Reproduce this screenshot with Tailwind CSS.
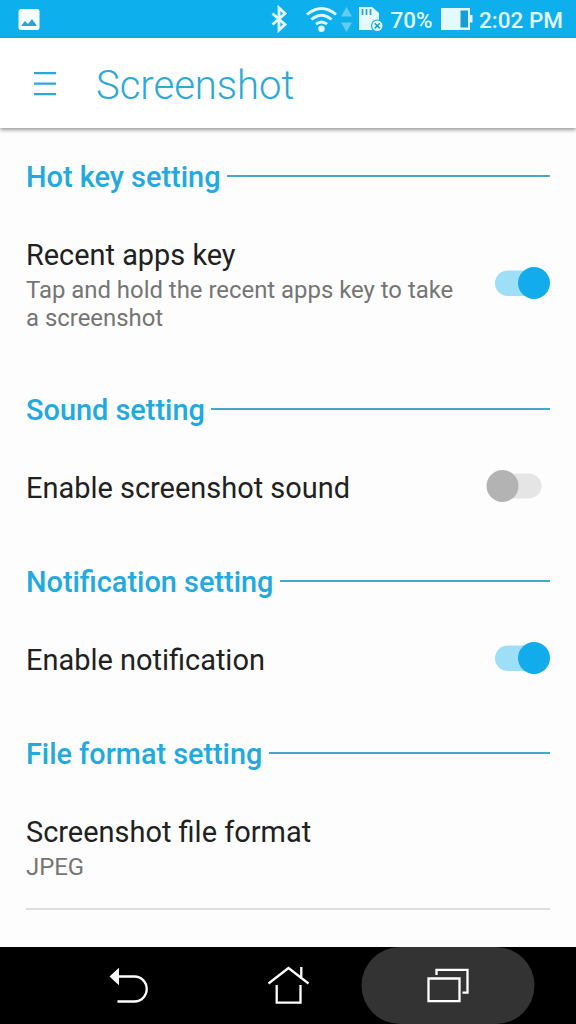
<!DOCTYPE html>
<html lang="en">
<head>
<meta charset="utf-8">
<title>Screenshot</title>
<script src="https://cdn.jsdelivr.net/npm/@tailwindcss/browser@4"></script>
</head>
<body class="w-[576px] h-[1024px] overflow-hidden flex flex-col bg-[#fdfdfd] font-['Roboto',sans-serif] text-[#212121]">
<div class="h-[38px] shrink-0 bg-[#0eafed] flex items-center text-[#e3fbff]">
  <svg class="w-[576px] h-[38px] shrink-0" viewBox="0 0 576 38" fill="none">
    <rect x="18.500" y="9" width="21" height="21" rx="2.500" fill="#f4feff"/>
    <path d="M21 26l4-5 3 3 4-5 5 7z" fill="#2ba4cf"/>
    <path d="M272.500 13.500l12.500 11-6 5.500V8l6 5.500-12.500 11" stroke="#e3fbff" stroke-width="2.800"/>
    <g stroke="#e3fbff" stroke-width="2.800"><path d="M307 14.500q14.500-12 29 0"/><path d="M311.500 19.500q10-8.500 20 0"/><path d="M316 24.200q5.500-4.500 11 0"/></g>
    <circle cx="321.500" cy="28.700" r="3.200" fill="#e3fbff"/>
    <path d="M341 16.500l5.500-9.500 5.500 9.500zM341 22.500l5.500 9.500 5.500-9.500z" fill="#62cbf3"/>
    <path d="M359 7h13l7 6v17h-20z" fill="#e3fbff"/>
    <path d="M362.500 9v6M366.500 9v6M370.500 9v6" stroke="#2ba4cf" stroke-width="1.700"/>
    <circle cx="377.300" cy="25.800" r="5.800" fill="#e3fbff" stroke="#0eafed" stroke-width="1.200"/>
    <path d="M374.700 23.200l5.200 5.200m0-5.200l-5.200 5.200" stroke="#2198c5" stroke-width="1.500"/>
    <text x="390.500" y="28" font-size="22" font-weight="500" fill="#e3fbff" textLength="42" lengthAdjust="spacingAndGlyphs">70%</text>
    <path d="M441 8h29v22h-29z" fill="#e3fbff"/><path d="M460.500 10.500h7.500v17h-7.500z" fill="#159fd4"/><path d="M470 15h2.500v7.500H470z" fill="#e3fbff"/>
    <text x="479" y="28" font-size="22.500" font-weight="500" fill="#e3fbff" textLength="84" lengthAdjust="spacingAndGlyphs">2:02 PM</text>
  </svg>
</div>
<header class="h-[90px] shrink-0 bg-white flex items-center pl-[33px] shadow-[0_2px_4px_rgba(0,0,0,0.4)]">
  <svg class="w-6 h-6 mt-px" viewBox="0 0 24 24" stroke="#2ba9d6" stroke-width="2.300"><path d="M1 1.200h22M1 11.700h22M1 22.200h22"/></svg>
  <h1 class="ml-[39px] mt-[5px] text-[40px] leading-[48px] font-light text-[#2ba9d8]">Screenshot</h1>
</header>
<main class="flex-1 px-[26px] pt-[21px]">
  <section class="h-[233px]">
    <div class="h-14 flex items-center"><h2 class="w-[201px] text-[28.900px] leading-[34px] font-medium text-[#20aadf] whitespace-nowrap">Hot key setting</h2><div class="flex-1 h-[2px] bg-[#45a9cb] -mt-[2px]"></div></div>
    <div class="flex pt-[33px] justify-between">
      <div><p class="text-[28.900px] leading-[34px]">Recent apps key</p><p class="mt-1 text-[23.900px] leading-7 text-[#757575] whitespace-nowrap">Tap and hold the recent apps key to take<br>a screenshot</p></div>
      <svg class="w-14 h-8 mt-[29px]" viewBox="0 0 56 32"><rect x="1" y="3.500" width="50" height="25.500" rx="12.750" fill="#9edff8"/><circle cx="40" cy="16" r="16" fill="#12abec"/></svg>
    </div>
  </section>
  <section class="h-[172px]">
    <div class="h-14 flex items-center"><h2 class="w-[185px] text-[28.900px] leading-[34px] font-medium text-[#20aadf] whitespace-nowrap">Sound setting</h2><div class="flex-1 h-[2px] bg-[#45a9cb] -mt-[2px]"></div></div>
    <div class="flex pt-[33px] justify-between">
      <p class="text-[28.950px] leading-[34px]">Enable screenshot sound</p>
      <svg class="w-14 h-8 mr-2 -mt-px" viewBox="0 0 56 32"><rect x="5" y="3.500" width="50.500" height="25" rx="12.500" fill="#e5e5e5"/><circle cx="16.500" cy="16" r="16" fill="#b3b3b3"/></svg>
    </div>
  </section>
  <section class="h-[172px]">
    <div class="h-14 flex items-center"><h2 class="w-[254px] text-[28.900px] leading-[34px] font-medium text-[#20aadf] whitespace-nowrap">Notification setting</h2><div class="flex-1 h-[2px] bg-[#45a9cb] -mt-[2px]"></div></div>
    <div class="flex pt-[33px] justify-between">
      <p class="text-[28.950px] leading-[34px]">Enable notification</p>
      <svg class="w-14 h-8 -mt-px" viewBox="0 0 56 32"><rect x="1" y="3.500" width="50" height="25.500" rx="12.750" fill="#9edff8"/><circle cx="40" cy="16" r="16" fill="#12abec"/></svg>
    </div>
  </section>
  <section class="h-[184px] border-b-2 border-[#dedede]">
    <div class="h-14 flex items-center"><h2 class="w-[243px] text-[28.800px] leading-[34px] font-medium text-[#20aadf] whitespace-nowrap">File format setting</h2><div class="flex-1 h-[2px] bg-[#45a9cb] -mt-[2px]"></div></div>
    <div class="pt-[33px]"><p class="text-[28.950px] leading-[34px]">Screenshot file format</p><p class="mt-1 text-[23.900px] leading-7 text-[#757575]">JPEG</p></div>
  </section>
</main>
<nav class="h-[77px] shrink-0 bg-black">
  <svg class="w-[576px] h-[77px]" viewBox="0 947 576 77" fill="none" stroke="#fff" stroke-width="2.300">
    <rect x="361.500" y="947" width="173" height="77" rx="38.500" fill="#333" stroke="none"/>
    <path d="M118 976.500h16.500a12.200 12.500 0 0 1 0 25H117.500"/><path d="M109.500 976.500l9.500-8.700v17.400z" fill="#fff" stroke="none"/>
    <path d="M268.500 983.500l20-15.500 20 15.500M301.300 967v12M276.700 985v17.700h23.800V985"/>
    <path d="M428.500 978.500h31v22.700h-31zM436.500 975v-5.200h31v22.800h-5"/>
  </svg>
</nav>
</body>
</html>
